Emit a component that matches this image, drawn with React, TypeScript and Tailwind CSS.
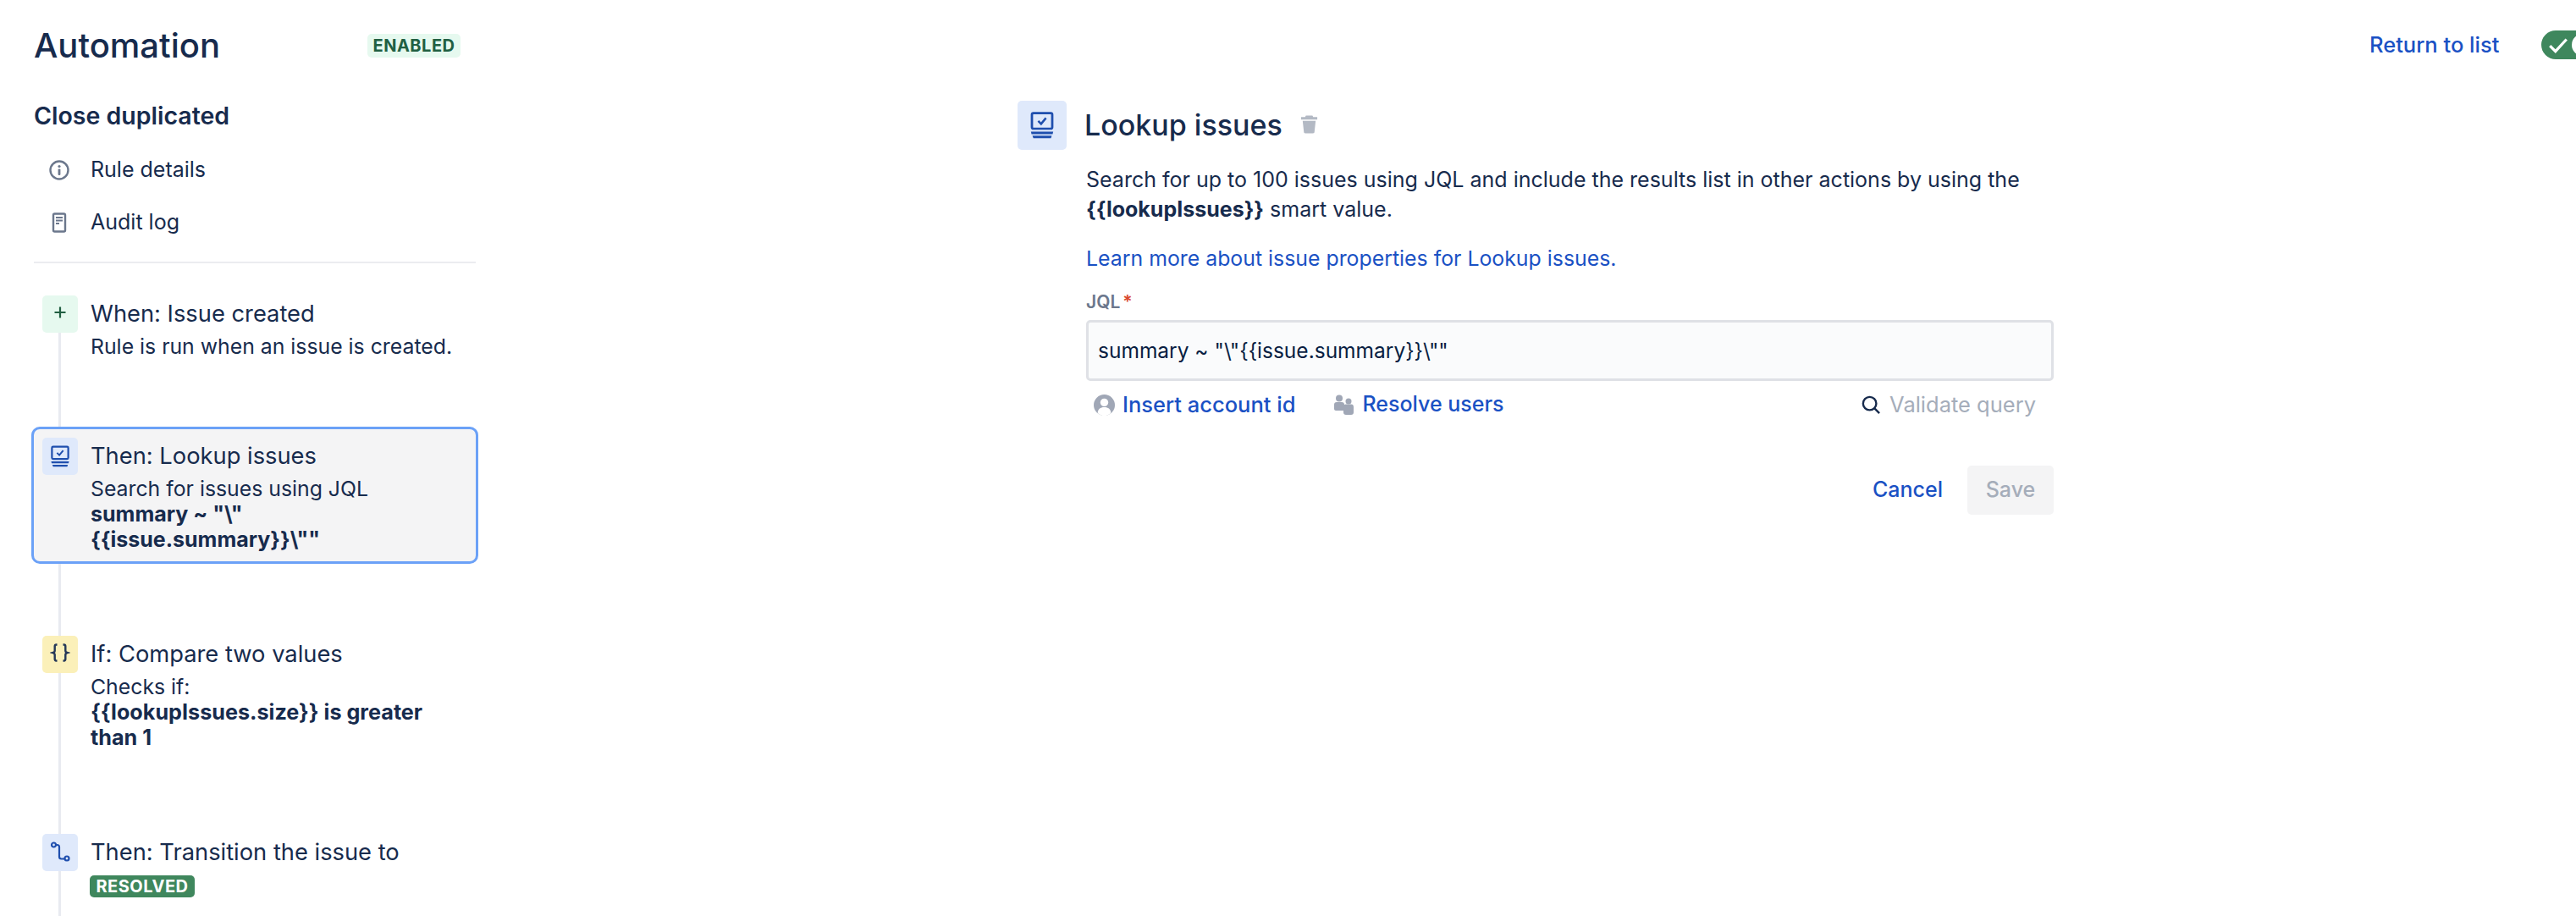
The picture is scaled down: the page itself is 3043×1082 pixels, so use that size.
import React from "react";

function LookupIcon({ className }: { className?: string }) {
  return (
    <svg viewBox="0 0 24 28" className={className} fill="none">
      <rect x="1.5" y="1.5" width="21" height="16" rx="1.5" stroke="#1f4fae" strokeWidth="2.4" />
      <path d="M8 9.5l3 3 5-6" stroke="#1f4fae" strokeWidth="2.2" />
      <path d="M0.5 20.5h23l-.6 2.6H1.1z M2 24.8h20l-.8 2.6H3z" fill="#1f4fae" />
    </svg>
  );
}

function Step({
  icon,
  iconBg,
  title,
  selected,
  fixedHeight,
  children,
}: {
  icon: React.ReactNode;
  iconBg: string;
  title: string;
  selected?: boolean;
  fixedHeight?: boolean;
  children: React.ReactNode;
}) {
  return (
    <div
      className={`relative -mx-[3px] flex gap-[15px] rounded-[10px] border-[3px] pt-[10px] pr-2 pb-[11px] pl-[10px] ${
        selected ? "border-[#6ba1f7] bg-[#f4f4f5]" : "border-transparent"
      } ${fixedHeight ? "h-[96px]" : ""}`}
    >
      <div className={`flex h-[44px] w-[42px] shrink-0 items-center justify-center rounded-[5px] ${iconBg}`}>
        {icon}
      </div>
      <div className="min-w-0 flex-1">
        <div className="mt-[5px] text-[27.3px] leading-[34px]">{title}</div>
        <div className="mt-[6px] text-[24.8px] leading-[30px]">{children}</div>
      </div>
    </div>
  );
}

export default function App() {
  return (
    <div className="flex h-[1082px] w-[3043px] overflow-hidden bg-white font-['Inter',sans-serif] text-[#172b4d]">
      {/* Sidebar */}
      <aside className="w-[562px] shrink-0 pl-10">
        <div className="mt-[30px] flex h-[48px] items-center">
          <h1 className="w-[394px] text-[40px] leading-[48px] font-medium">Automation</h1>
          <span className="flex h-[28px] w-[110px] items-center justify-center rounded-[5px] bg-[#e6f9ef] text-[20px] font-bold tracking-[0.5px] text-[#215f42]">
            ENABLED
          </span>
        </div>
        <h2 className="mt-[41px] text-[28.5px] leading-[36px] font-semibold">Close duplicated</h2>

        <div className="mt-[15px] flex h-[62px] items-center gap-[25px] pl-[18px] text-[25px]">
          <svg viewBox="0 0 24 24" className="h-6 w-6" fill="none">
            <circle cx="12" cy="12" r="10.5" stroke="#6b778c" strokeWidth="2.4" />
            <circle cx="12" cy="7.5" r="1.6" fill="#6b778c" />
            <rect x="10.6" y="10.5" width="2.8" height="7.5" rx="1" fill="#6b778c" />
          </svg>
          <span>Rule details</span>
        </div>
        <div className="flex h-[62px] items-center gap-[25px] pl-[18px] text-[25px]">
          <svg viewBox="0 0 24 24" className="h-6 w-6" fill="none">
            <rect x="5" y="1.5" width="14" height="21" rx="1.5" stroke="#6b778c" strokeWidth="2.4" />
            <path d="M8 6h8M8 9.5h8M8 13h4" stroke="#6b778c" strokeWidth="2" />
          </svg>
          <span>Audit log</span>
        </div>
        <div className="mt-[15px] h-[2px] bg-[#ebecf0]" />

        {/* Rule steps */}
        <div className="relative mt-[25px] flex flex-col gap-[72px]">
          <div className="absolute top-[40px] bottom-[-400px] left-[29px] w-[3px] bg-[#e8eaf0]" />
          <Step
            fixedHeight
            iconBg="bg-[#e6f9ef]"
            title="When: Issue created"
            icon={
              <svg viewBox="0 0 16 16" className="mb-[4px] h-4 w-4" fill="none">
                <path d="M8 1.5v13M1.5 8h13" stroke="#215f42" strokeWidth="2.2" />
              </svg>
            }
          >
            Rule is run when an issue is created.
          </Step>

          <Step
            selected
            iconBg="bg-[#dfe9fb]"
            title="Then: Lookup issues"
            icon={<LookupIcon className="h-[26px] w-[22px]" />}
          >
            Search for issues using JQL
            <br />
            <b className="text-[25px] font-bold">
              summary ~ "\"
              <br />
              {'{{issue.summary}}\\""'}
            </b>
          </Step>

          <Step
            iconBg="bg-[#fbf0b9]"
            title="If: Compare two values"
            icon={
              <svg viewBox="0 0 24 24" className="mb-[4px] h-6 w-6" fill="none" stroke="#253858" strokeWidth="2.4">
                <path d="M8.500 2.500H7.500C6.300 2.500 5.700 3.200 5.700 4.400v5c0 1.400-.8 2.200-2.200 2.600 1.400.4 2.200 1.200 2.200 2.600v5c0 1.200.6 1.900 1.800 1.900h1" />
                <path d="M15.500 2.500h1c1.200 0 1.800.7 1.800 1.900v5c0 1.400.8 2.200 2.200 2.600-1.400.4-2.200 1.200-2.200 2.600v5c0 1.200-.6 1.900-1.800 1.900h-1" />
              </svg>
            }
          >
            Checks if:
            <br />
            <b className="text-[25.2px] font-bold">{"{{lookupIssues.size}} is greater than 1"}</b>
          </Step>

          <Step
            iconBg="bg-[#dfe9fb]"
            title="Then: Transition the issue to"
            icon={
              <svg viewBox="0 0 24 24" className="mb-[2px] h-6 w-6" fill="none" stroke="#1f4fae" strokeWidth="2.200">
                <circle cx="4.500" cy="4" r="2.500" />
                <circle cx="20" cy="20" r="2.500" />
                <path d="M7 4h1.500C10 4 11 5 11 6.500V18c0 1.500 1 2.500 2.500 2.500H17.500" />
              </svg>
            }
          >
            <span className="-ml-[1px] inline-flex h-[26px] w-[124px] items-center justify-center rounded-[5px] bg-[#3f875d] text-[20px] font-bold tracking-[0.5px] text-white">
              RESOLVED
            </span>
          </Step>
        </div>
      </aside>

      {/* Component form */}
      <main className="ml-[640px] w-[1224px] shrink-0 pt-[119px]">
        <div className="flex h-[58px] items-center">
          <div className="flex h-[58px] w-[58px] items-center justify-center rounded-[5px] bg-[#dfe9fb]">
            <LookupIcon className="h-[32px] w-[28px]" />
          </div>
          <h2 className="ml-[21px] text-[34px] leading-[44px] font-medium">Lookup issues</h2>
          <svg viewBox="0 0 22 24" className="mt-[-4px] ml-[20px] h-[23px] w-[23px]" fill="#b3b9c4">
            <path d="M7 1.500h8l1 2h5v3H1v-3h5z M3 8h16l-1.500 14c-.1 1-.8 1.500-1.700 1.500H6.200c-.9 0-1.600-.5-1.700-1.500z" />
          </svg>
        </div>

        <div className="ml-[81px]">
          <p className="mt-[18px] text-[25px] leading-[35px]">
            Search for up to 100 issues using JQL and include the results list in other actions by using the
            <br />
            <b className="font-bold">{"{{lookupIssues}}"}</b> smart value.
          </p>
          <a className="mt-[23px] block text-[24.85px] leading-[35px] text-[#1a51c4]">
            Learn more about issue properties for Lookup issues.
          </a>
          <div className="mt-[22px] text-[21px] leading-[24px] font-semibold text-[#6b778c]">
            JQL<span className="ml-[3px] text-[#d9482b]">*</span>
          </div>
          <input
            readOnly
            value={'summary ~ "\\"{{issue.summary}}\\""'}
            className="mt-[9px] h-[72px] w-full rounded-[5px] border-[3px] border-[#dfe1e6] bg-[#fafbfc] px-[11px] text-[24.5px] text-[#091e42] outline-none"
          />
          <div className="mt-[11px] flex h-[34px] items-center text-[25.5px] font-medium text-[#1a51c4]">
            <svg viewBox="0 0 24 24" className="ml-[9px] h-[25px] w-[25px]">
              <circle cx="12" cy="12" r="12" fill="#a0a7b6" />
              <circle cx="12" cy="9" r="4.500" fill="#fff" />
              <path d="M4.500 21c0-4 3-6.500 7.500-6.500s7.500 2.500 7.500 6.500c-2 1.800-4.600 3-7.500 3s-5.500-1.200-7.500-3z" fill="#fff" />
            </svg>
            <span className="ml-[9px]">Insert account id</span>
            <svg viewBox="0 0 24 24" className="ml-[45px] h-[24px] w-[24px]" fill="#a0a7b6">
              <circle cx="7" cy="4.500" r="4" />
              <circle cx="18" cy="8" r="3.500" />
              <path d="M1 12c0-2 1-3 3-3h6c2 0 3 1 3 3v7H3c-1 0-2-1-2-2z" />
              <path d="M12 15c0-2.500 1-3.500 3-3.500h6c2 0 3 1 3 3.500v6c0 2-1 3-3 3h-6c-2 0-3-1-3-3z" />
            </svg>
            <span className="ml-[10px] text-[25px]">Resolve users</span>
            <svg viewBox="0 0 24 24" className="mr-[11px] ml-auto h-[22px] w-[22px]" fill="none" stroke="#172b4d" strokeWidth="2.600">
              <circle cx="10.500" cy="10.500" r="8.500" />
              <path d="M16.500 16.500L23 23" />
            </svg>
            <span className="mr-[21px] font-normal text-[#a5adba]">Validate query</span>
          </div>
          <div className="mt-[55px] flex items-center justify-end gap-[29px] text-[25px] font-medium">
            <button className="text-[#1a51c4]">Cancel</button>
            <button className="h-[58px] w-[102px] rounded-[5px] bg-[#f4f4f5] text-[#a5adba]">Save</button>
          </div>
        </div>
      </main>

      {/* Top right */}
      <div className="ml-[373px] flex h-[106px] shrink-0 items-center gap-[50px]">
        <a className="text-[25.5px] font-medium whitespace-nowrap text-[#1a51c4]">Return to list</a>
        <div className="flex h-[34px] w-[72px] shrink-0 items-center rounded-full bg-[#3f875d] pl-[7px]">
          <svg viewBox="0 0 24 24" className="h-[26px] w-[26px]" fill="none" stroke="#fff" strokeWidth="3">
            <path d="M3 13l6 6L21 6" />
          </svg>
          <span className="ml-[3px] h-[26px] w-[26px] rounded-full bg-white" />
        </div>
      </div>
    </div>
  );
}
